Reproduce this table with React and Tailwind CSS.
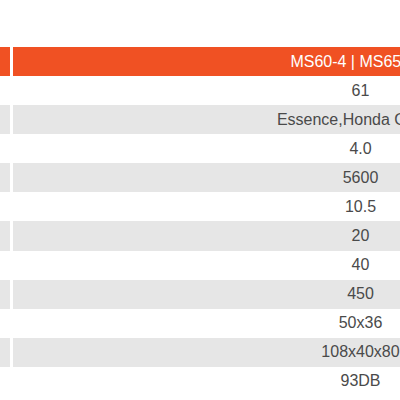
export default function App() {
  const rows = ["61", "Essence,Honda GX160", "4.0", "5600", "10.5", "20", "40", "450", "50x36", "108x40x80", "93DB"];
  return (
    <div className="w-[400px] h-[400px] overflow-hidden bg-white" style={{ fontFamily: '"Liberation Sans", Arial, sans-serif' }}>
      <div className="pt-[47px] flex flex-col">
        <div className="flex gap-[3px] h-[29px]">
          <div className="w-[10px] shrink-0 bg-[#f05123]"></div>
          <div className="w-[695px] shrink-0 bg-[#f05123] text-white text-[16px] flex items-center justify-center">MS60-4 | MS65-4 E</div>
        </div>
        {rows.map((r, i) => (
          <div key={i} className="flex gap-[3px] h-[29.1px]">
            <div className={"w-[10px] shrink-0 " + (i % 2 === 1 ? "bg-[#e6e6e6]" : "bg-white")}></div>
            <div className={"w-[695px] shrink-0 text-[#4a4a4a] text-[16px] flex items-center justify-center " + (i % 2 === 1 ? "bg-[#e6e6e6]" : "bg-white")}>{r}</div>
          </div>
        ))}
      </div>
    </div>
  );
}
